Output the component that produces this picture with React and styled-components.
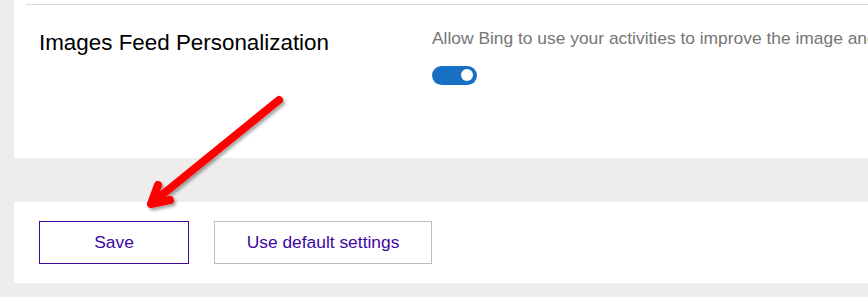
import React from "react";
import styled, { createGlobalStyle } from "styled-components";

const Global = createGlobalStyle`
  html, body { margin: 0; padding: 0; background: #ededed; overflow: hidden; }
  body { font-family: "Liberation Sans", Arial, sans-serif; }
  * { box-sizing: border-box; }
`;

const Page = styled.div`
  position: relative;
  width: 868px;
  height: 297px;
  padding-left: 14px;
  display: flex;
  flex-direction: column;
`;

const Panel = styled.section`
  background: #ffffff;
  height: ${(p) => p.$h}px;
  margin-top: ${(p) => p.$mt || 0}px;
  overflow: hidden;
`;

const Divider = styled.div`
  height: 1px;
  margin: 4px 0 0 12px;
  background: #d8d8d8;
`;

const Row = styled.div`
  display: grid;
  grid-template-columns: 393px 1fr;
  padding: 23px 0 0 25px;
  align-items: start;
`;

const Title = styled.h2`
  margin: 2px 0 0;
  font-size: 22.4px;
  line-height: 1.2;
  font-weight: 400;
  color: #000;
  white-space: nowrap;
`;

const Control = styled.div`
  display: flex;
  flex-direction: column;
  align-items: flex-start;
  min-width: 0;
`;

const Desc = styled.p`
  margin: 0;
  font-size: 17.4px;
  line-height: 1.2;
  color: #767676;
  white-space: nowrap;
`;

const Toggle = styled.div`
  margin-top: 17px;
  width: 45px;
  height: 19px;
  border-radius: 10px;
  background: #1870c4;
  display: flex;
  align-items: center;
  justify-content: flex-end;
  padding-right: 4px;
`;

const Knob = styled.span`
  width: 12px;
  height: 12px;
  border-radius: 50%;
  background: #fff;
`;

const Actions = styled.div`
  display: flex;
  gap: 25px;
  padding: 19px 0 0 25px;
`;

const Button = styled.button`
  width: ${(p) => p.$w}px;
  height: 43px;
  background: #fff;
  border: 1px solid ${(p) => (p.$primary ? "#4007a2" : "#bdbdbd")};
  color: #4007a2;
  font-family: "Liberation Sans", Arial, sans-serif;
  font-size: 17.4px;
  display: flex;
  align-items: center;
  justify-content: center;
  padding: 0;
  cursor: pointer;
`;

const ArrowLayer = styled.svg`
  position: absolute;
  left: 0;
  top: 0;
  pointer-events: none;
`;

function Arrow() {
  return (
    <ArrowLayer width="868" height="297" viewBox="0 0 868 297">
      <defs>
        <filter id="sh" x="-20%" y="-20%" width="140%" height="140%">
          <feDropShadow dx="2" dy="2.5" stdDeviation="1.6" floodColor="#000" floodOpacity="0.35" />
        </filter>
      </defs>
      <g
        filter="url(#sh)"
        stroke="#ff0000"
        strokeWidth="8"
        strokeLinecap="round"
        strokeLinejoin="round"
        fill="none"
      >
        <path d="M279 100 L152 203" />
        <path d="M158 185 L151 204 L170 200" />
      </g>
    </ArrowLayer>
  );
}

export default function App() {
  return (
    <>
      <Global />
      <Page>
        <Panel $h={158}>
          <Divider />
          <Row>
            <Title>Images Feed Personalization</Title>
            <Control>
              <Desc>
                Allow Bing to use your activities to improve the image and video feed experience
              </Desc>
              <Toggle role="switch" aria-checked="true">
                <Knob />
              </Toggle>
            </Control>
          </Row>
        </Panel>
        <Panel $h={81} $mt={44}>
          <Actions>
            <Button $primary $w={150}>Save</Button>
            <Button $w={218}>Use default settings</Button>
          </Actions>
        </Panel>
        <Arrow />
      </Page>
    </>
  );
}
